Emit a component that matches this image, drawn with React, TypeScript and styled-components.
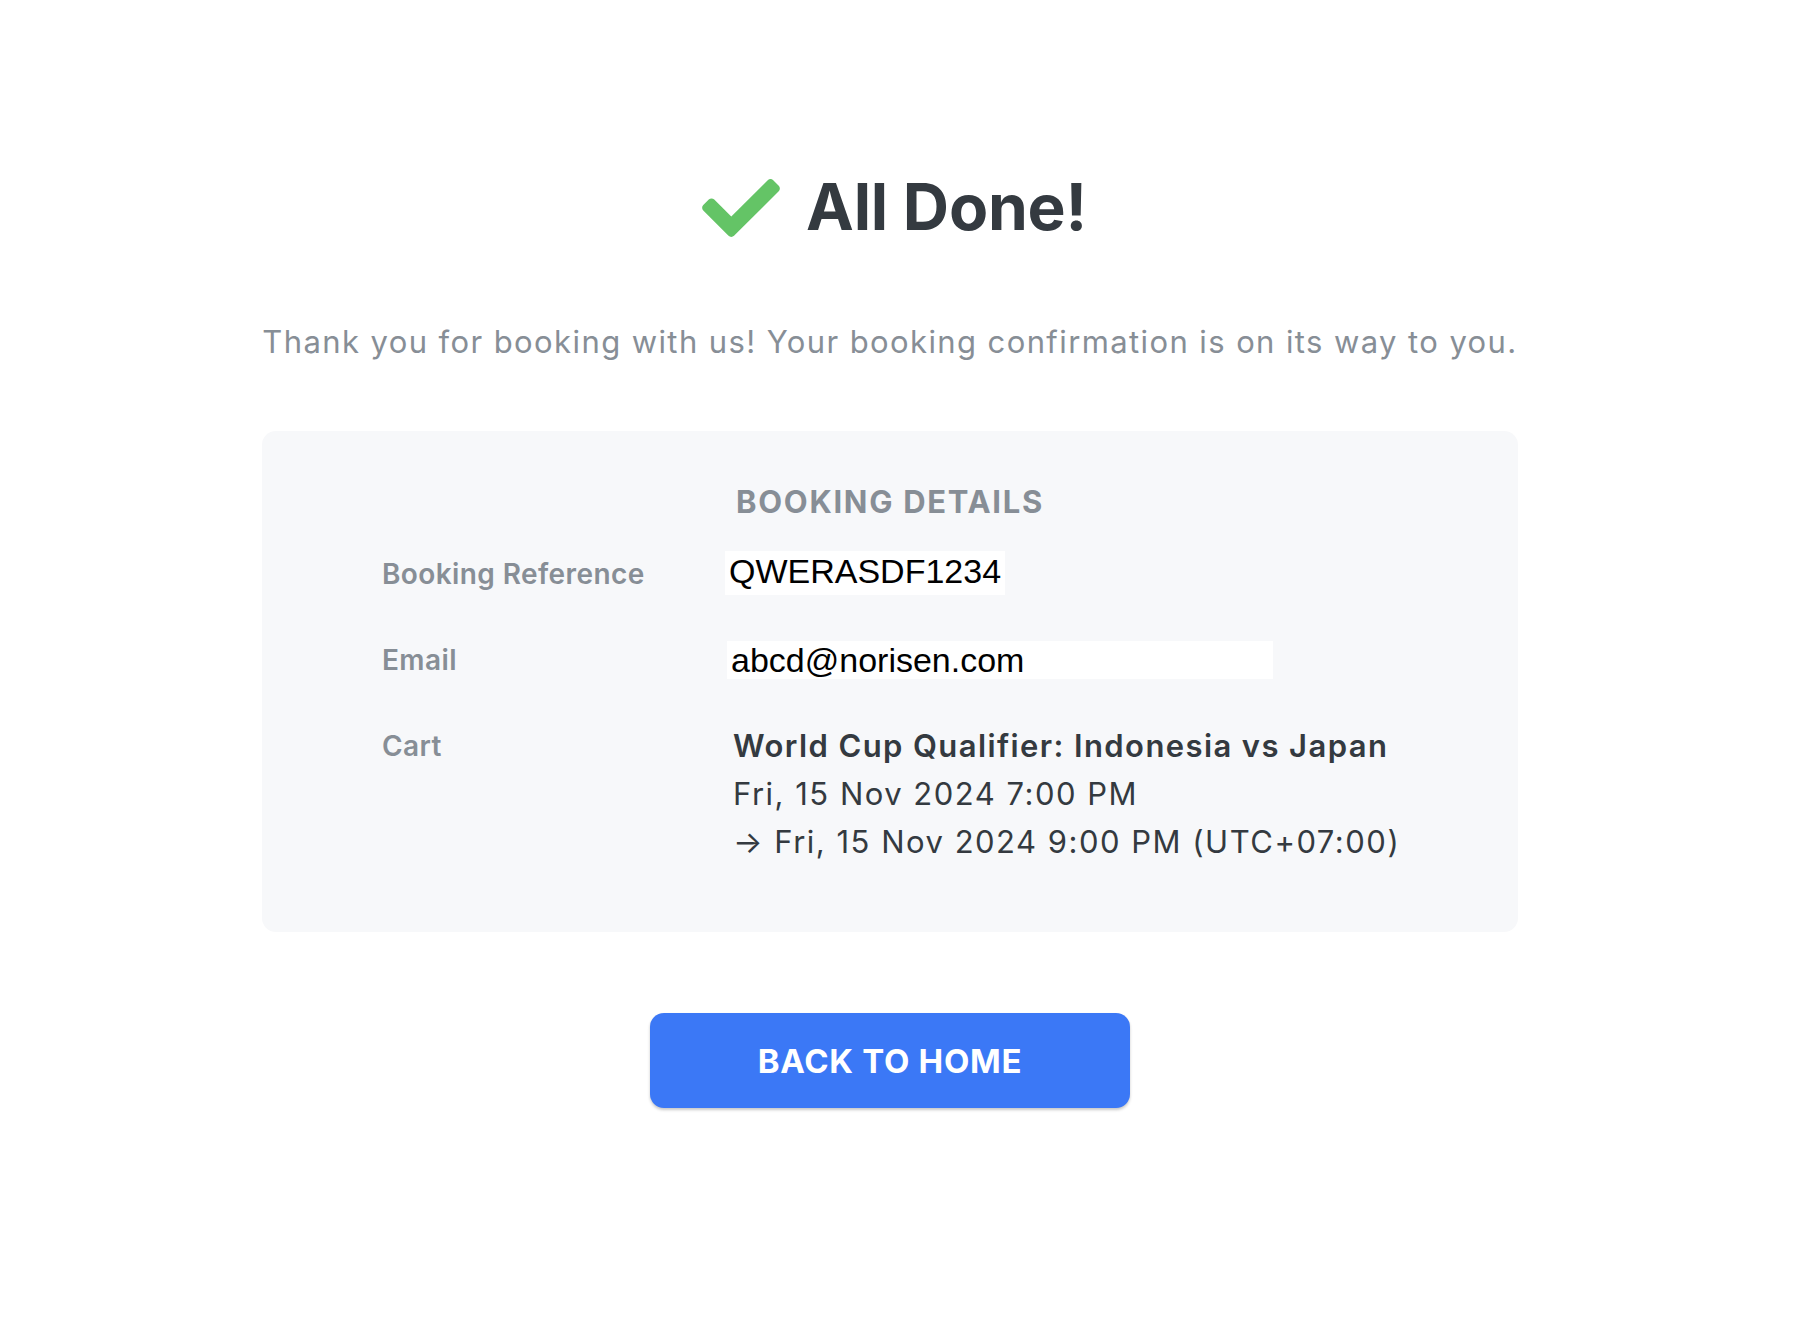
import React from "react";
import styled, { createGlobalStyle } from "styled-components";

const GlobalStyle = createGlobalStyle`
  html, body {
    margin: 0;
    padding: 0;
    background: #ffffff;
  }
  body {
    font-family: Inter, "Noto Sans", "Liberation Sans", sans-serif;
    -webkit-font-smoothing: antialiased;
  }
`;

const Page = styled.main`
  min-height: 100vh;
  box-sizing: border-box;
  padding: 168px 18px 80px 0;
  display: flex;
  flex-direction: column;
  align-items: center;
`;

const TitleRow = styled.h1`
  margin: 0 0 0 9px;
  display: flex;
  align-items: center;
  gap: 26px;
  font-family: Inter, "Liberation Sans", sans-serif;
  font-size: 64px;
  line-height: 77px;
  font-weight: 700;
  color: #343a40;
  letter-spacing: -0.2px;
`;

const CheckIcon = styled.svg`
  width: 78px;
  height: 58px;
  flex: none;
  margin-top: 2px;
`;

const Subtitle = styled.p`
  margin: 78px 0 0;
  font-size: 31px;
  line-height: 38px;
  font-weight: 400;
  color: #878e96;
  letter-spacing: 1.4px;
  text-align: center;
  white-space: nowrap;
`;

const Card = styled.section`
  margin-top: 70px;
  width: 1256px;
  box-sizing: border-box;
  padding: 54px 120px 66px;
  background: #f7f8fa;
  border-radius: 14px;
  display: flex;
  flex-direction: column;
`;

const CardHeading = styled.h2`
  margin: 0 0 31px;
  text-align: center;
  font-size: 31px;
  line-height: 34px;
  font-weight: 700;
  color: #878e96;
  letter-spacing: 1.7px;
`;

const DetailList = styled.div`
  display: flex;
  flex-direction: column;
  gap: 38px;
`;

const Row = styled.div<{ $align?: "center" | "start" }>`
  display: grid;
  grid-template-columns: 343px 1fr;
  align-items: ${(p) => (p.$align === "start" ? "start" : "center")};
`;

const Label = styled.div`
  font-size: 28px;
  line-height: 48px;
  font-weight: 600;
  color: #878e96;
  letter-spacing: 0.4px;
`;

const Redacted = styled.span<{
  $width?: number;
  $size: number;
  $height: number;
  $shift?: number;
  $lift?: number;
}>`
  display: inline-block;
  justify-self: start;
  box-sizing: border-box;
  margin-left: ${(p) => p.$shift ?? 0}px;
  margin-top: ${(p) => -(p.$lift ?? 0)}px;
  width: ${(p) => (p.$width ? `${p.$width}px` : "auto")};
  height: ${(p) => p.$height}px;
  padding: 0 4px ${(p) => (p.$lift ?? 0) * 2}px;
  background: #ffffff;
  font-family: "Liberation Sans", Arial, sans-serif;
  font-size: ${(p) => p.$size}px;
  line-height: ${(p) => p.$height - (p.$lift ?? 0) * 2}px;
  color: #000000;
  white-space: nowrap;
`;

const CartInfo = styled.div`
  padding-left: 8px;
  display: flex;
  flex-direction: column;
`;

const CartLine = styled.div<{ $strong?: boolean }>`
  font-size: 31px;
  line-height: 48px;
  font-weight: ${(p) => (p.$strong ? 600 : 400)};
  color: #343a40;
  letter-spacing: ${(p) => (p.$strong ? "1.4px" : "1.5px")};
  white-space: nowrap;
`;

const HomeButton = styled.button`
  margin-top: 81px;
  width: 480px;
  height: 95px;
  border: none;
  border-radius: 14px;
  background: #3b78f6;
  color: #ffffff;
  font-family: Inter, "Liberation Sans", sans-serif;
  font-size: 33px;
  font-weight: 700;
  letter-spacing: 0.7px;
  cursor: pointer;
  box-shadow: 0 2px 3px rgba(0, 0, 0, 0.22);
`;

export default function App() {
  return (
    <>
      <GlobalStyle />
      <Page>
        <TitleRow>
          <CheckIcon viewBox="0 65 512 382" aria-hidden="true">
            <path
              fill="#64c466"
              d="M173.898 439.404l-166.4-166.4c-9.997-9.997-9.997-26.206 0-36.204l36.203-36.204c9.997-9.998 26.207-9.998 36.204 0L192 312.69 432.095 72.596c9.997-9.997 26.207-9.997 36.204 0l36.203 36.204c9.997 9.997 9.997 26.206 0 36.204l-294.4 294.401c-9.998 9.997-26.207 9.997-36.204-.001z"
            />
          </CheckIcon>
          All Done!
        </TitleRow>
        <Subtitle>
          Thank you for booking with us! Your booking confirmation is on its way to you.
        </Subtitle>
        <Card>
          <CardHeading>BOOKING DETAILS</CardHeading>
          <DetailList>
            <Row>
              <Label>Booking Reference</Label>
              <Redacted $size={34} $height={44} $lift={2}>
                QWERASDF1234
              </Redacted>
            </Row>
            <Row>
              <Label>Email</Label>
              <Redacted $size={34} $height={38} $width={546} $shift={2}>
                abcd@norisen.com
              </Redacted>
            </Row>
            <Row $align="start">
              <Label>Cart</Label>
              <CartInfo>
                <CartLine $strong>World Cup Qualifier: Indonesia vs Japan</CartLine>
                <CartLine>Fri, 15 Nov 2024 7:00 PM</CartLine>
                <CartLine>→ Fri, 15 Nov 2024 9:00 PM (UTC+07:00)</CartLine>
              </CartInfo>
            </Row>
          </DetailList>
        </Card>
        <HomeButton type="button">BACK TO HOME</HomeButton>
      </Page>
    </>
  );
}
